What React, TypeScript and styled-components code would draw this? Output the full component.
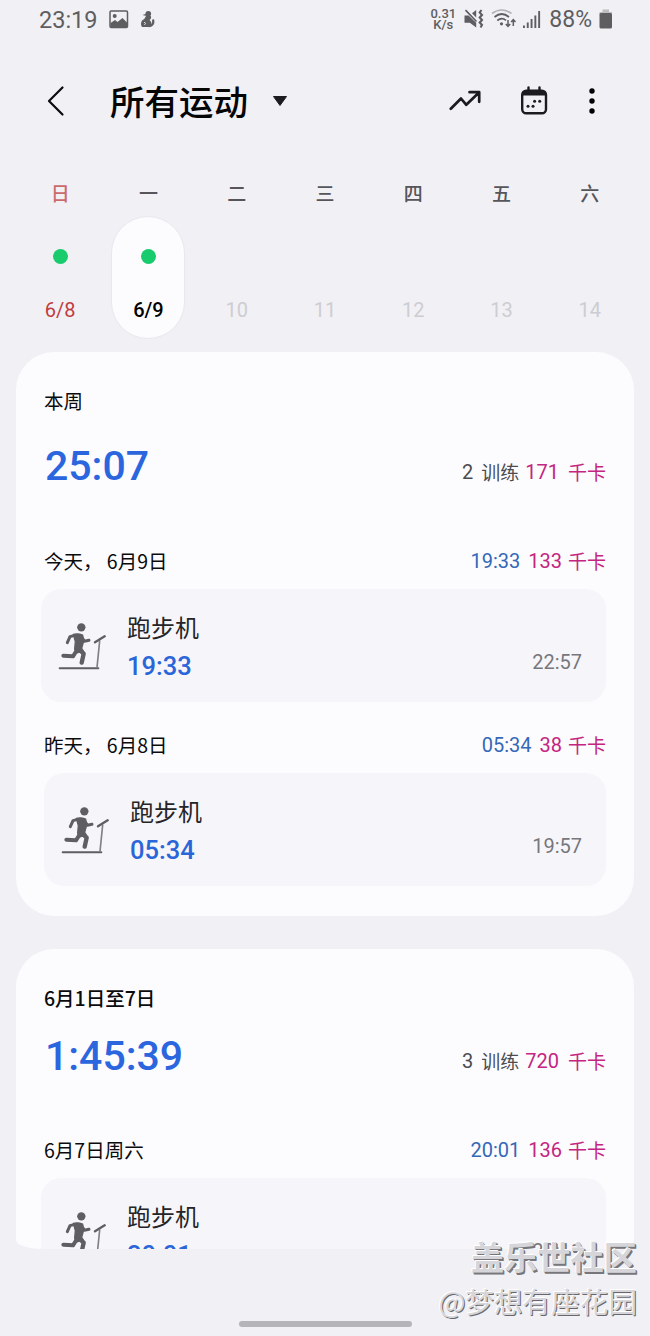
import React from 'react';
import styled, { createGlobalStyle } from 'styled-components';

const Global = createGlobalStyle`
  * { box-sizing: border-box; }
  body { margin: 0; background: #f1f0f5; }
`;

const latin = `Roboto, "Noto Sans CJK SC", sans-serif`;
const cjk = `"Noto Sans CJK SC", sans-serif`;

const Screen = styled.div`
  position: relative;
  width: 650px;
  height: 1336px;
  overflow: hidden;
  display: flex;
  flex-direction: column;
  background: #f1f0f5;
  font-family: ${latin};
  color: #0b0b0d;
  svg { display: block; flex: none; }
`;

const StatusBar = styled.div`
  height: 40px;
  padding: 0 37px 0 39px;
  display: flex;
  align-items: center;
  justify-content: space-between;
  color: #5e5e60;
`;
const StatusGroup = styled.div`
  display: flex;
  align-items: center;
  height: 38px;
  margin-bottom: 2px;
`;
const StatusText = styled.span<{ $size: number; $gap?: number }>`
  margin-left: ${p => p.$gap || 0}px;
  padding-top: 2px;
  font-size: ${p => p.$size}px;
  line-height: 38px;
  white-space: nowrap;
`;
const Speed = styled.div`
  width: 26px;
  margin-right: 8px;
  font-size: 13px;
  line-height: 11.5px;
  font-weight: 500;
  text-align: center;
`;

const Header = styled.header`
  height: 122px;
  padding: 0 55px 0 46px;
  display: flex;
  align-items: center;
`;
const Title = styled.h1`
  margin: -2px 24px 0 44px;
  font: 500 34.5px/50px ${cjk};
  color: #050506;
  white-space: nowrap;
`;
const Spacer = styled.div`
  flex: 1;
`;

const Week = styled.div`
  height: 190px;
  padding: 14px 16px 0;
  display: grid;
  grid-template-columns: repeat(7, 1fr);
`;
const Day = styled.div`
  display: flex;
  flex-direction: column;
  align-items: center;
`;
const DayName = styled.div<{ $sunday?: boolean }>`
  font: 500 19px/34px ${cjk};
  color: ${p => (p.$sunday ? '#cb6a6c' : '#55555a')};
`;
const DayPill = styled.div<{ $selected?: boolean }>`
  width: 74px;
  height: 123px;
  margin-top: 6px;
  padding-top: 32px;
  border-radius: 37px;
  border: 1px solid ${p => (p.$selected ? '#e9e8ee' : 'transparent')};
  background: ${p => (p.$selected ? '#fcfcff' : 'transparent')};
  display: flex;
  flex-direction: column;
  align-items: center;
`;
const Dot = styled.div<{ $on?: boolean }>`
  width: 15px;
  height: 15px;
  border-radius: 50%;
  background: ${p => (p.$on ? '#18cc6d' : 'transparent')};
`;
const DayDate = styled.div<{ $tone: string; $strong?: boolean }>`
  margin-top: 31px;
  font-size: 20px;
  line-height: 30px;
  font-weight: ${p => (p.$strong ? 500 : 400)};
  color: ${p => p.$tone};
`;

const Feed = styled.main`
  height: 897px;
  margin: 0 16px;
  overflow: hidden;
  border-radius: 0 0 26px 26px / 0 0 9px 9px;
`;
const Card = styled.section<{ $height: number }>`
  height: ${p => p.$height}px;
  margin-bottom: 33px;
  padding: 34px 28px 0;
  border-radius: 38px;
  background: #fcfcff;
`;
const Period = styled.div<{ $bold?: boolean }>`
  font: ${p => (p.$bold ? 500 : 400)} 19.5px/30px ${cjk};
`;
const Summary = styled.div<{ $top: number }>`
  margin-top: ${p => p.$top}px;
  height: 50px;
  display: flex;
  justify-content: space-between;
`;
const Total = styled.div`
  padding-left: 1px;
  font-size: 41px;
  line-height: 50px;
  font-weight: 500;
  color: #2b66de;
`;
const Stats = styled.div<{ $top?: number }>`
  display: flex;
  height: 30px;
  margin-top: ${p => p.$top || 0}px;
  font-size: 20px;
  line-height: 30px;
  white-space: nowrap;
`;
const Stat = styled.span<{ $tone: string; $gap?: number; $han?: boolean }>`
  margin-left: ${p => p.$gap || 0}px;
  color: ${p => p.$tone};
  font-size: ${p => (p.$han ? 19 : 20)}px;
  font-family: ${p => (p.$han ? cjk : latin)};
`;
const DayHead = styled.div<{ $top: number }>`
  margin-top: ${p => p.$top}px;
  height: 30px;
  display: flex;
  justify-content: space-between;
`;
const DayLabel = styled.div`
  font: 400 19.5px/30px ${cjk};
  white-space: pre;
`;
const Workout = styled.article<{ $wide?: boolean }>`
  height: 113px;
  margin: 13px 0 0 ${p => (p.$wide ? -3 : 0)}px;
  padding: 21px 24px 0 17px;
  border-radius: 20px;
  background: #f6f6fa;
  display: flex;
`;
const WorkoutIcon = styled.div`
  width: 50px;
  padding-top: 12px;
`;
const WorkoutInfo = styled.div`
  flex: 1;
  margin-left: 19px;
`;
const WorkoutName = styled.div`
  font: 400 24px/34px ${cjk};
  color: #252528;
`;
const WorkoutTime = styled.div`
  margin-top: 5px;
  font-size: 25.5px;
  line-height: 34px;
  font-weight: 500;
  color: #2b66d8;
`;
const StartedAt = styled.div`
  margin-top: 37px;
  font-size: 20px;
  line-height: 30px;
  color: #77777c;
`;

const HomeBar = styled.div`
  width: 173px;
  height: 6px;
  margin: 72px auto 0;
  border-radius: 3px;
  background: #b5b5b7;
`;
const Watermark = styled.div`
  position: absolute;
  right: 13px;
  top: 1233px;
  text-align: right;
  white-space: nowrap;
  font-family: ${cjk};
  color: #d6d6da;
`;
const Community = styled.div`
  font-size: 33.2px;
  line-height: 46px;
  font-weight: 700;
  text-shadow: -1px -1px 0 #fff, 1px 1px 0 #77777b, 1.5px 1.5px 0 #77777b;
`;
const Author = styled.div`
  font-size: 28.6px;
  line-height: 44px;
  text-shadow: -1px -1px 0 #fff, 1px 1px 0 #68686c;
`;

const Treadmill = () => (
  <svg width="48" height="50" viewBox="86 127 144 150" fill="none" stroke="#5f5f63" strokeLinecap="round" strokeLinejoin="round">
    <circle cx="156" cy="143" r="12.5" fill="#5f5f63" stroke="none" />
    <path d="M132 164Q146 160 160 166L162 188L157 206L162 214L140 220L136 208L138 186Z" fill="#5f5f63" strokeWidth="4" />
    <path d="M136 167L122 171L114 189" strokeWidth="9" />
    <path d="M156 170L165 185L179 182" strokeWidth="9" />
    <path d="M149 209L163 222L157 249" strokeWidth="13" />
    <path d="M143 211L131 230L102 228" strokeWidth="12" />
    <path d="M91 266H207" strokeWidth="6" />
    <path d="M203 263L211 184" strokeWidth="5" stroke="#808085" />
    <path d="M197 188L226 170" strokeWidth="7" />
  </svg>
);

const PictureIcon = () => (
  <svg width="20" height="19" viewBox="0 0 20 19" style={{ marginLeft: 11 }}>
    <rect x="1" y="1" width="17.5" height="16.5" rx="1.2" fill="none" stroke="#5e5e60" strokeWidth="1.5" />
    <circle cx="5.7" cy="6" r="2" fill="#5e5e60" />
    <path d="M1.5 13L6 10L8.5 12L13.5 8L18 12.5V17H1.5Z" fill="#5e5e60" />
  </svg>
);

const FigureIcon = () => (
  <svg width="16" height="19" viewBox="0 0 16 19" style={{ marginLeft: 11 }} fill="#5e5e60">
    <circle cx="8.3" cy="3.7" r="2.8" />
    <path d="M2.5 5L7 3.5L6.5 6Z" />
    <path d="M6 6L10.7 6Q12 8 9.5 10Q13 13 10.5 17H2Q0 14 2 10.5Q5 9 6 6Z" />
    <path d="M9 16Q14 15.5 13.2 10.5" fill="none" stroke="#5e5e60" strokeWidth="2.3" strokeLinecap="round" />
    <path d="M4.2 12L5.5 13.5L4.5 14.8" fill="none" stroke="#f1f0f5" strokeWidth="1" />
  </svg>
);

const MuteIcon = () => (
  <svg width="20" height="20" viewBox="0 0 20 20" fill="#5e5e60">
    <path d="M0.5 6.5H4.5L12.2 13.8V18.5L5.8 13.8H0.5Z" />
    <path d="M8 4.3L12.2 1V8.5Z" />
    <path d="M1.5 1.2L12.5 12.5" stroke="#5e5e60" strokeWidth="1.7" />
    <path d="M17.5 1L15.7 3.5L18 6L15.7 8.5L18 11L15.7 13.5L18 16L16.5 18.5" fill="none" stroke="#5e5e60" strokeWidth="2.1" />
  </svg>
);

const WifiIcon = () => (
  <svg width="26" height="20" viewBox="0 0 26 20" fill="none" stroke="#5e5e60" strokeWidth="1.7" style={{ marginLeft: 7 }}>
    <path d="M1 4.5Q10.5-2.5 20.5 4.5" stroke="#b4b4b7" />
    <path d="M3.5 8Q10.7 2 18 8" />
    <path d="M6.3 11.5Q10.7 7.8 15 11.3" />
    <circle cx="10.5" cy="14.8" r="1.6" fill="#5e5e60" stroke="none" />
    <path d="M17 11V17M14.8 15L17 17.3L19.2 15" strokeWidth="1.5" />
    <path d="M22.3 17V11M20.1 13L22.3 10.7L24.5 13" strokeWidth="1.5" />
  </svg>
);

const SignalIcon = () => (
  <svg width="18" height="18" viewBox="0 0 18 18" fill="#5e5e60" style={{ marginLeft: 6 }}>
    <path d="M0 15.5h1.9V18H0zM3.8 12.5h1.9V18H3.8zM7.6 9h1.9v9H7.6zM11.4 5.5h1.9V18h-1.9zM15.2 1h1.9v17h-1.9z" />
  </svg>
);

const BatteryIcon = () => (
  <svg width="14" height="20" viewBox="0 0 14 20" style={{ marginLeft: 7 }}>
    <path d="M3.5 0.5H10V3H13V6H0.5V3H3.5Z" fill="#bdbdc0" />
    <rect x="0.5" y="4" width="12.5" height="15.5" rx="1.5" fill="#5e5e60" />
  </svg>
);

const week = [
  { name: '日', date: '6/8', tone: '#bf3d3d', on: true },
  { name: '一', date: '6/9', tone: '#000', on: true },
  { name: '二', date: '10', tone: '#cdcdd1' },
  { name: '三', date: '11', tone: '#cdcdd1' },
  { name: '四', date: '12', tone: '#cdcdd1' },
  { name: '五', date: '13', tone: '#cdcdd1' },
  { name: '六', date: '14', tone: '#cdcdd1' },
];

const BLUE = '#3468b8';
const PINK = '#c42580';

type EntryProps = { top: number; label: string; duration: string; kcal: string; start: string; wide?: boolean };

const Entry = ({ top, label, duration, kcal, start, wide }: EntryProps) => (
  <>
    <DayHead $top={top}>
      <DayLabel>{label}</DayLabel>
      <Stats>
        <Stat $tone={BLUE}>{duration}</Stat>
        <Stat $tone={PINK} $gap={8}>{kcal}</Stat>
        <Stat $tone={PINK} $gap={6} $han>千卡</Stat>
      </Stats>
    </DayHead>
    <Workout $wide={wide}>
      <WorkoutIcon><Treadmill /></WorkoutIcon>
      <WorkoutInfo>
        <WorkoutName>跑步机</WorkoutName>
        <WorkoutTime>{duration}</WorkoutTime>
      </WorkoutInfo>
      <StartedAt>{start}</StartedAt>
    </Workout>
  </>
);

type WeekTotalProps = { top: number; statsTop: number; total: string; count: string; kcal: string };

const WeekTotal = ({ top, statsTop, total, count, kcal }: WeekTotalProps) => (
  <Summary $top={top}>
    <Total>{total}</Total>
    <Stats $top={statsTop}>
      <Stat $tone="#4c4c50">{count}</Stat>
      <Stat $tone="#4c4c50" $gap={8} $han>训练</Stat>
      <Stat $tone={PINK} $gap={6}>{kcal}</Stat>
      <Stat $tone={PINK} $gap={9} $han>千卡</Stat>
    </Stats>
  </Summary>
);

export default function App() {
  return (
    <Screen>
      <Global />
      <StatusBar>
        <StatusGroup>
          <StatusText $size={23.5}>23:19</StatusText>
          <PictureIcon />
          <FigureIcon />
        </StatusGroup>
        <StatusGroup>
          <Speed>0.31<br />K/s</Speed>
          <MuteIcon />
          <WifiIcon />
          <SignalIcon />
          <StatusText $size={23} $gap={8}>88%</StatusText>
          <BatteryIcon />
        </StatusGroup>
      </StatusBar>

      <Header>
        <svg width="20" height="32" viewBox="0 0 20 32" fill="none" stroke="#0b0b0d" strokeWidth="2.2" strokeLinecap="round" strokeLinejoin="round">
          <path d="M16.5 2.5L3 16L16.5 29.5" />
        </svg>
        <Title>所有运动</Title>
        <svg width="16" height="12" viewBox="0 0 16 12"><path d="M1.5 1.5H14.5L8 10.5Z" fill="#1b1b20" stroke="#1b1b20" strokeLinejoin="round" /></svg>
        <Spacer />
        <svg width="32" height="22" viewBox="0 0 32 22" fill="none" stroke="#1b1b20" strokeWidth="2.7" strokeLinecap="round" strokeLinejoin="round">
          <path d="M1.8 18.8L12 8.5L17.3 14.8L30 2.5M20.5 2.2H30.2V11.8" />
        </svg>
        <svg width="28" height="30" viewBox="0 0 28 30" style={{ marginLeft: 39 }}>
          <path d="M8.5 1.5V6M19.5 1.5V6" stroke="#1b1b20" strokeWidth="2.4" strokeLinecap="round" />
          <rect x="2.2" y="4.7" width="23.8" height="22.6" rx="4" fill="none" stroke="#1b1b20" strokeWidth="2.4" />
          <path d="M2 9.5V8Q2 4.5 6 4.5H22Q26 4.5 26 8V9.5Z" fill="#1b1b20" />
          <g fill="#1b1b20"><circle cx="14.6" cy="15.2" r="1.5" /><circle cx="19.7" cy="15.2" r="1.5" /><circle cx="8" cy="20.2" r="1.5" /><circle cx="13" cy="20.2" r="1.5" /></g>
        </svg>
        <svg width="6" height="28" viewBox="0 0 6 28" style={{ marginLeft: 41 }}>
          <circle cx="3" cy="4" r="2.7" /><circle cx="3" cy="14" r="2.7" /><circle cx="3" cy="24" r="2.7" />
        </svg>
      </Header>

      <Week>
        {week.map((d, i) => (
          <Day key={d.name}>
            <DayName $sunday={i === 0}>{d.name}</DayName>
            <DayPill $selected={i === 1}>
              <Dot $on={d.on} />
              <DayDate $tone={d.tone} $strong={i === 1}>{d.date}</DayDate>
            </DayPill>
          </Day>
        ))}
      </Week>

      <Feed>
        <Card $height={564}>
          <Period>本周</Period>
          <WeekTotal top={25} statsTop={16} total="25:07" count="2" kcal="171" />
          <Entry top={55} label="今天， 6月9日" duration="19:33" kcal="133" start="22:57" wide />
          <Entry top={28} label="昨天， 6月8日" duration="05:34" kcal="38" start="19:57" />
        </Card>
        <Card $height={564}>
          <Period $bold>6月1日至7日</Period>
          <WeekTotal top={18} statsTop={15} total="1:45:39" count="3" kcal="720" />
          <Entry top={54} label="6月7日周六" duration="20:01" kcal="136" start="20:11" wide />
        </Card>
      </Feed>

      <HomeBar />

      <Watermark>
        <Community>盖乐世社区</Community>
        <Author>@梦想有座花园</Author>
      </Watermark>
    </Screen>
  );
}
